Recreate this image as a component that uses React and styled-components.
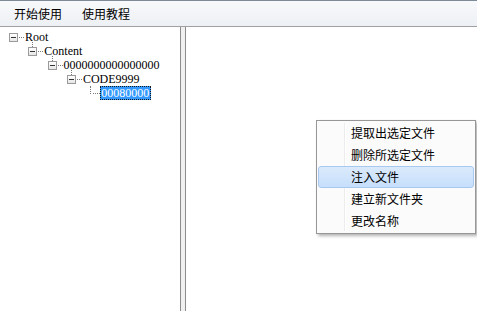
import React from "react";
import styled, { createGlobalStyle } from "styled-components";

const Global = createGlobalStyle`
  html, body { margin: 0; padding: 0; background: #ffffff; }
  body { font-family: "Noto Sans CJK SC", "Liberation Sans", sans-serif; }
`;

const Window = styled.div`
  position: relative;
  width: 477px;
  height: 311px;
  display: flex;
  flex-direction: column;
  border-top: 1px solid #7d8a99;
  box-sizing: border-box;
  overflow: hidden;
`;

const MenuBar = styled.div`
  height: 25px;
  display: flex;
  align-items: center;
  padding: 1px 0 0 4px;
  box-sizing: border-box;
  background: linear-gradient(#f8f9fb, #edf0f4);
`;

const MenuItem = styled.div`
  padding: 0 10px;
  font-size: 12px;
  line-height: 16px;
  color: #000;
  font-family: "Noto Sans CJK SC", sans-serif;
`;

const Body = styled.div`
  flex: 1;
  display: flex;
  border-top: 1px solid #a0a0a0;
  background: #f0f0f0;
`;

const TreePanel = styled.div`
  width: 180px;
  background: #fff;
  border-right: 1px solid #8c8c8c;
  padding-top: 3px;
  box-sizing: content-box;
`;

const Splitter = styled.div`
  width: 4px;
  background: #f0f0f0;
`;

const ViewPanel = styled.div`
  flex: 1;
  background: #fff;
  border-left: 1px solid #8c8c8c;
`;

const Row = styled.div`
  height: 14px;
  display: flex;
  align-items: center;
  padding-left: ${(p) => 9 + p.$level * 19.3}px;
  position: relative;
`;

const Expander = styled.div`
  position: relative;
  width: 9px;
  height: 9px;
  box-sizing: border-box;
  border: 1px solid #9a9a9a;
  background: linear-gradient(#ffffff, #e6e6e6);
  flex: none;
  &::after {
    content: "";
    position: absolute;
    left: 1px;
    top: 3px;
    width: 5px;
    height: 1px;
    background: #333;
  }
  &::before {
    content: ${(p) => (p.$stem ? '""' : "none")};
    position: absolute;
    left: 3px;
    top: -6px;
    height: 5px;
    border-left: 1px dotted #7a7a7a;
  }
`;

const HDots = styled.div`
  width: ${(p) => p.$w}px;
  margin: 0 ${(p) => p.$after}px 0 1px;
  border-top: 1px dotted #7a7a7a;
  flex: none;
`;

const LeafStem = styled.div`
  width: 1px;
  align-self: flex-start;
  height: 8px;
  margin-left: 4px;
  border-left: 1px dotted #7a7a7a;
  flex: none;
`;

const Label = styled.span`
  font-family: "Liberation Serif", "DejaVu Serif", serif;
  font-size: 12px;
  line-height: 14px;
  white-space: nowrap;
  padding: ${(p) => (p.$selected ? "0 2px 0 1px" : "0")};
  background: ${(p) => (p.$selected ? "#3399ff" : "transparent")};
  color: ${(p) => (p.$selected ? "#fff" : "#000")};
  outline: ${(p) => (p.$selected ? "1px dotted #1a1a1a" : "none")};
  outline-offset: -1px;
`;

const ContextMenu = styled.div`
  position: absolute;
  left: 316px;
  top: 119px;
  width: 160px;
  box-sizing: border-box;
  padding: 1px;
  background: #fbfbfb;
  border: 1px solid #979797;
  box-shadow: 2px 2px 3px rgba(0, 0, 0, 0.3);
  &::before {
    content: "";
    position: absolute;
    left: 27px;
    top: 2px;
    bottom: 2px;
    width: 1px;
    background: #ececec;
    box-shadow: 1px 0 0 #ffffff;
  }
`;

const CtxItem = styled.div`
  position: relative;
  height: 22px;
  box-sizing: border-box;
  display: flex;
  align-items: center;
  padding: 0 0 2px 32px;
  font-family: "Noto Sans CJK SC", sans-serif;
  font-size: 12px;
  color: #000;
  border: 1px solid ${(p) => (p.$active ? "#a8c9ef" : "transparent")};
  border-radius: 3px;
  background: ${(p) =>
    p.$active ? "linear-gradient(#dbeafc, #c6dffb)" : "transparent"};
`;

const tree = [
  { level: 0, text: "Root", stem: false },
  { level: 1, text: "Content", stem: true },
  { level: 2, text: "0000000000000000", stem: true },
  { level: 3, text: "CODE9999", stem: true },
];

const menu = ["提取出选定文件", "删除所选定文件", "注入文件", "建立新文件夹", "更改名称"];

export default function App() {
  return (
    <>
      <Global />
      <Window>
        <MenuBar>
          <MenuItem>开始使用</MenuItem>
          <MenuItem>使用教程</MenuItem>
        </MenuBar>
        <Body>
          <TreePanel>
            {tree.map((n) => (
              <Row key={n.text} $level={n.level}>
                <Expander $stem={n.stem} />
                <HDots $w={5} $after={1} />
                <Label>{n.text}</Label>
              </Row>
            ))}
            <Row $level={4}>
              <LeafStem />
              <HDots $w={7} $after={0} />
              <Label $selected>00080000</Label>
            </Row>
          </TreePanel>
          <Splitter />
          <ViewPanel />
        </Body>
        <ContextMenu>
          {menu.map((m, i) => (
            <CtxItem key={m} $active={i === 2}>
              {m}
            </CtxItem>
          ))}
        </ContextMenu>
      </Window>
    </>
  );
}
